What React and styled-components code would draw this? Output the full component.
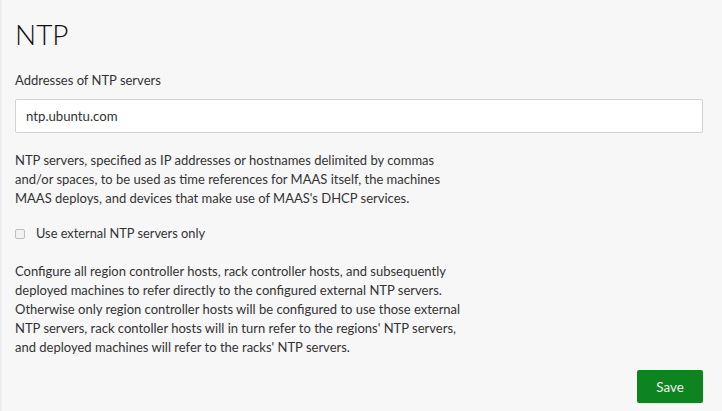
import React from "react";
import styled, { createGlobalStyle } from "styled-components";

const Global = createGlobalStyle`
  html, body { margin: 0; padding: 0; background: #f7f7f7; }
  body { font-family: Lato, "Open Sans", sans-serif; color: #333; }
`;

const Page = styled.div`
  box-sizing: border-box;
  width: 722px;
  height: 411px;
  border-left: 2px solid #ececec;
  padding: 0 19px 0 13px;
  display: flex;
  flex-direction: column;
`;

const Title = styled.h1`
  margin: 18px 0 0;
  font-size: 28px;
  line-height: 32px;
  font-weight: 300;
  color: #111;
`;

const Label = styled.label`
  margin-top: 21px;
  font-size: 13px;
  line-height: 18px;
  color: #333;
`;

const Input = styled.input`
  box-sizing: border-box;
  margin-top: 10px;
  width: 100%;
  height: 34px;
  border: 1px solid #d2d2d2;
  border-radius: 2px;
  background: #fff;
  padding: 0 10px;
  font-family: inherit;
  font-size: 13.2px;
  color: #333;
  outline: none;
`;

const Help = styled.p`
  margin: ${(p) => p.$top}px 0 0;
  font-size: 13px;
  line-height: 19px;
  color: #333;
`;

const CheckRow = styled.label`
  margin-top: 16px;
  display: flex;
  align-items: center;
  gap: 11px;
  font-size: 12.8px;
  line-height: 19px;
`;

const Box = styled.span`
  width: 8px;
  height: 8px;
  border: 1px solid #bdbdbd;
  border-radius: 2px;
  background: #f2f2f2;
  flex: none;
`;

const Footer = styled.div`
  margin-top: auto;
  margin-bottom: 8px;
  display: flex;
  justify-content: flex-end;
`;

const Button = styled.button`
  width: 66px;
  height: 33px;
  border: none;
  border-radius: 2px;
  background: #0e8420;
  color: #f0f0f0;
  font-family: inherit;
  font-size: 13.4px;
`;

export default function App() {
  return (
    <>
      <Global />
      <Page>
        <Title>NTP</Title>
        <Label>Addresses of NTP servers</Label>
        <Input defaultValue="ntp.ubuntu.com" readOnly />
        <Help $top={18}>
          NTP servers, specified as IP addresses or hostnames delimited by commas
          <br />
          and/or spaces, to be used as time references for MAAS itself, the machines
          <br />
          MAAS deploys, and devices that make use of MAAS's DHCP services.
        </Help>
        <CheckRow>
          <Box />
          Use external NTP servers only
        </CheckRow>
        <Help $top={19}>
          Configure all region controller hosts, rack controller hosts, and subsequently
          <br />
          deployed machines to refer directly to the configured external NTP servers.
          <br />
          Otherwise only region controller hosts will be configured to use those external
          <br />
          NTP servers, rack contoller hosts will in turn refer to the regions' NTP servers,
          <br />
          and deployed machines will refer to the racks' NTP servers.
        </Help>
        <Footer>
          <Button>Save</Button>
        </Footer>
      </Page>
    </>
  );
}
